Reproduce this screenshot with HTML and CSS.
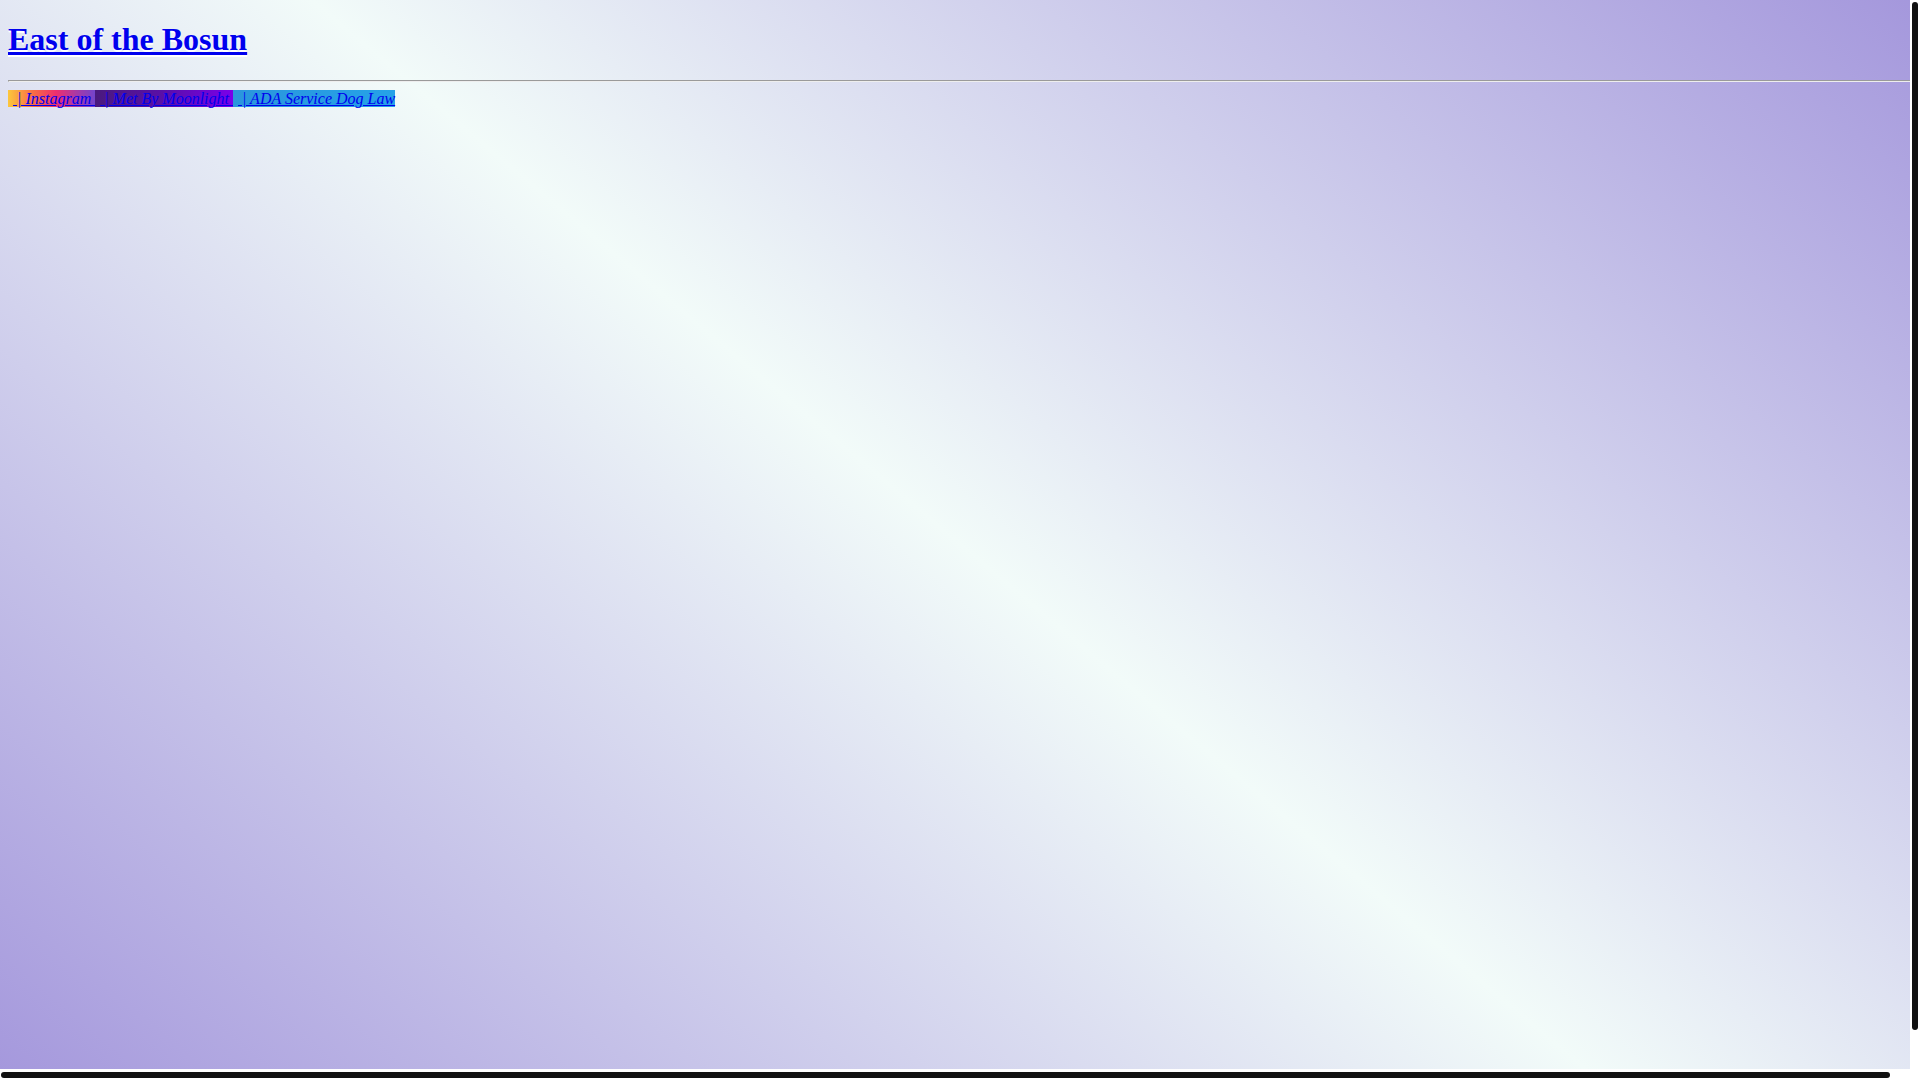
FILE: index.html
```html
<!DOCTYPE html>
<html lang="en">
<head>
<meta charset="utf-8">
<title>East of the Bosun</title>
<link rel="stylesheet" href="styles.css">
</head>
<body>
<h1 class="site-title"><a class="title-link" href="#">East of the Bosun</a></h1>
<hr class="rule">
<nav class="links"><a class="lnk lnk-ig" href="#">&nbsp;| Instagram </a><a class="lnk lnk-moon" href="#">&nbsp;| Met By Moonlight </a><a class="lnk lnk-ada" href="#">&nbsp;| ADA Service Dog Law</a></nav>
<div class="sb sb-v" aria-hidden="true"><div class="sb-thumb sb-thumb-v"></div></div>
<div class="sb sb-h" aria-hidden="true"><div class="sb-thumb sb-thumb-h"></div></div>
<div class="sb sb-corner" aria-hidden="true"></div>
</body>
</html>
```
FILE: styles.css
```css
html {
  margin: 0;
  padding: 0;
}
body {
  margin: 0 8px 8px 8px;
  padding: 0;
  width: 100vw;
  height: 100vh;
  font-family: "Liberation Serif", "Times New Roman", serif;
  font-size: 16px;
  background: linear-gradient(40deg, #a497dc 0%, #f2fbf9 50%, #a497dc 100%);
}
.site-title {
  font-size: 32px;
  font-weight: bold;
  margin: 21.44px 0;
}
.title-link {
  color: #0000ee;
  text-decoration: underline;
  text-shadow: 0 2px 0 #ffffff;
}
.rule {
  margin: 8px 0;
}
.links {
  font-style: italic;
}
.lnk {
  color: #0000ee;
  text-decoration: underline;
  padding-left: 5px;
}
.lnk-ig {
  background: linear-gradient(90deg, #fcc73c 0%, #f86a45 30%, #ee2f6e 55%, #a53aa8 80%, #7344cc 100%);
}
.lnk-moon {
  background: linear-gradient(90deg, #4a1a7e 0%, #5a0fa8 50%, #7a00ea 100%);
}
.lnk-ada {
  background: linear-gradient(90deg, #2b96dc 0%, #25a2e8 100%);
}

/* browser scrollbars as seen in the capture */
.sb {
  position: fixed;
  background: #ffffff;
  box-sizing: border-box;
  display: flex;
}
.sb-v {
  top: 0;
  right: 0;
  width: 10px;
  height: 1069px;
  padding: 2px 2px 0 2px;
}
.sb-h {
  left: 0;
  bottom: 0;
  width: 1910px;
  height: 11px;
  padding: 2.5px 0 0 1px;
}
.sb-corner {
  right: 0;
  bottom: 0;
  width: 10px;
  height: 11px;
}
.sb-thumb {
  background: #111111;
  border-radius: 3px;
}
.sb-thumb-v {
  width: 6px;
  height: 1028px;
}
.sb-thumb-h {
  width: 1889px;
  height: 6px;
}
```
